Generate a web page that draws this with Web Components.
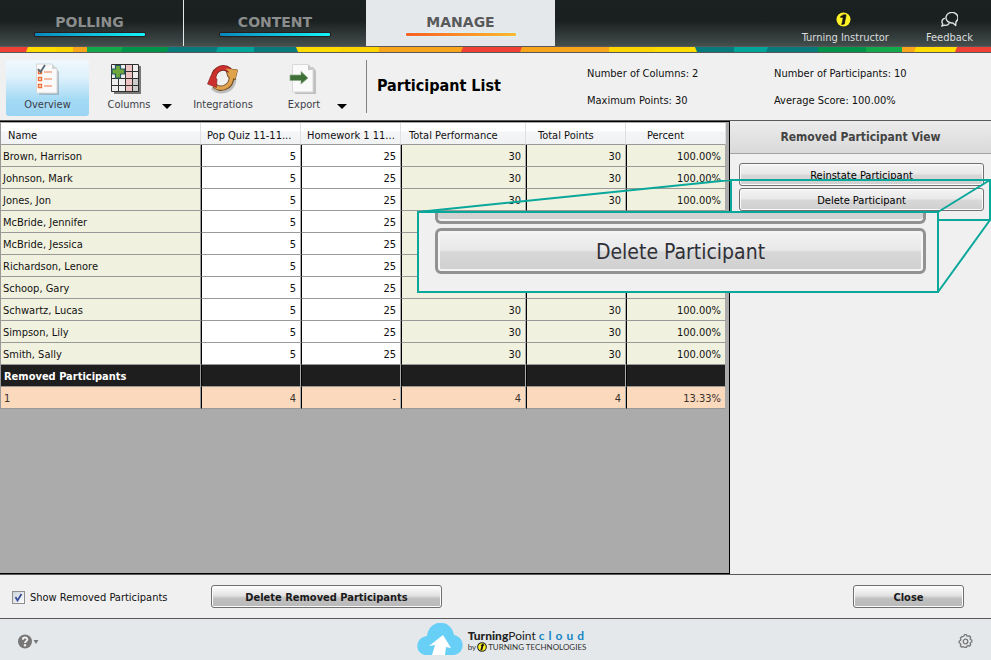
<!DOCTYPE html>
<html lang="en">
<head>
<meta charset="utf-8">
<title>Participant List</title>
<style>
html, body { margin: 0; }
body { font: 11px/14px "DejaVu Sans Condensed", "DejaVu Sans", "Noto Sans", sans-serif; color: #111; background: #f0f0f0; }
</style>
</head>
<body>
<turning-app></turning-app>
<script>
const define = (name, html) => customElements.define(name, class extends HTMLElement {
  constructor() {
    super();
    this.attachShadow({ mode: 'open' }).innerHTML = typeof html === 'function' ? html() : html;
  }
});

/* One main tab: label with a gradient bar below it */
define('nav-tab', `
<style>
:host { display: flex; flex: 0 0 183px; }
:host([wide]) { flex-basis: 189px; }
button { flex: 1; border: 0; padding: 14px 0 10px; font: bold 14px/17px "DejaVu Sans", sans-serif; color: #8b8d8d; background: none; display: flex; flex-direction: column; align-items: center; gap: 2px; }
:host(:first-child) button { padding-right: 4px; }
:host([line]) button { border-left: 1px solid #e5e8ea; }
:host([active]) button { background: #e4e8eb; color: #595a5c; }
i { width: 110px; height: 3px; border-radius: 1px; background: linear-gradient(90deg, #0788bd, #14f4fa); box-shadow: 0 0 1px 1px #281b1b; }
:host([active]) i { background: linear-gradient(90deg, #fb5e22, #fdb92f); box-shadow: 0 0 1px 1px #d9f3f8; }
</style>
<button type="button"><slot></slot><i></i></button>`);

define('user-link', `
<style>
:host { display: block; }
a { display: flex; flex-direction: column; align-items: center; gap: 4px; color: #dadcdc; text-decoration: none; }
::slotted(svg) { height: 15px; display: block; }
</style>
<a href="#"><slot name="icon"></slot><span><slot></slot></span></a>`);

define('app-header', `
<style>
:host { display: flex; height: 46px; background: linear-gradient(#1a2121, #1a2020 45%, #434e4d); }
nav { display: flex; }
.user { margin-left: auto; display: flex; gap: 37px; padding: 12px 18px 0 0; }
</style>
<nav>
<nav-tab>POLLING</nav-tab><nav-tab line>CONTENT</nav-tab><nav-tab wide active>MANAGE</nav-tab>
</nav>
<div class="user">
<user-link><svg slot="icon" width="19" height="15" viewBox="0 0 19 15"><circle cx="7.500" cy="7.500" r="7" fill="#fff326"/><path d="M4.200 5.200C5.500 3.200 8 2.200 10 2.800L9.800 5C9 7.500 9 9.500 8.400 12L5.600 12.600C6.500 10 6.800 8 7.200 5.600z" fill="#141414" stroke="#141414" stroke-width=".6"/></svg>Turning Instructor</user-link>
<user-link><svg slot="icon" width="18" height="15" viewBox="0 0 18 15" fill="none" stroke="#e0e2e2" stroke-width="1.4" stroke-linecap="round" stroke-linejoin="round"><path d="M15.700 13.500l-2.800-2.600A6 5.300 0 1 1 16 9.600z"/><path d="M4.400 6.400A4 3.700 0 0 0 2.700 12L1.800 14l2.700-.8c2 .5 3.600-.2 4.400-1.500"/></svg>Feedback</user-link>
</div>`);

define('color-stripe', () => {
  const parts = [[0,'#ef4136'],[27,'#ffdd00'],[56,'#fdd500'],[73,'#f9a51b',0],[87,'#12a84c',0],[122,'#00934a'],[168,'#067a7d'],[217,'#00a59a'],[254,'#067a7d',0],[297,'#ffdd00',-2],[340,'#fdd500'],[379,'#f9a51b',0],[462,'#ef4136'],[521,'#f9a51b'],[609,'#fdd500',0],[655,'#ffdd00'],[696,'#067a7d',-2],[734,'#00a59a',0],[767,'#067a7d'],[818,'#00934a',0],[866,'#12a84c',0],[902,'#f9a51b',0],[915,'#ffdd00'],[956,'#ef4136']];
  return `<style>:host { display: block; height: 5px; border: solid #59595b; border-width: 1px 0; } svg { display: block; width: 100%; height: 5px; }</style>
<svg viewBox="0 0 991 5" preserveAspectRatio="none">${parts.map(([x, c, s = 2]) => `<path fill="${c}" d="M${x ? x + s / 2 : -5} 0H991V5H${x ? x - s / 2 : -5}Z"/>`).join('')}</svg>`;
});

define('tool-button', `
<style>
:host { display: flex; align-items: flex-start; }
button { box-sizing: border-box; height: 56px; min-width: 62px; border: 0; border-radius: 3px; padding: 2px 0 3px; background: none; color: #3c3e48; font: inherit; line-height: 16px; display: flex; flex-direction: column; align-items: center; gap: 1px; }
:host([active]) button { min-width: 83px; background: linear-gradient(#f0f8fd, #dff2fc 30%, #a5daf5 70%, #9bd4f3); }
.more { display: none; width: 20px; min-width: 20px; padding: 44px 5px 7px; }
:host([menu]) .more { display: block; margin-left: -3px; }
svg { display: block; }
</style>
<button type="button"><slot name="icon"></slot><span><slot></slot></span></button>
<button type="button" class="more" aria-label="More"><svg width="10" height="5"><path d="M0 0H10L5 5Z" fill="#000"/></svg></button>`);

define('app-toolbar', `
<style>
:host { display: flex; align-items: flex-start; padding: 7px 6px 4px; border-bottom: 1px solid #5a5a5c; min-height: 56px; }
.tools { display: flex; align-items: flex-start; padding-right: 14px; border-right: 1px solid #838383; height: 53px; }
tool-button:nth-child(2) { margin-left: 9px; }
tool-button:nth-child(3) { margin-left: 15px; }
tool-button:nth-child(4) { margin-left: 19px; }
h1 { font-size: 16px; line-height: 20px; margin: 16px 0 0 10px; width: 210px; color: #000; white-space: nowrap; }
dl { display: grid; grid-template-columns: 187px auto; row-gap: 13px; margin: 7px 0 0; }
dl div { display: flex; gap: 3px; white-space: nowrap; }
dt, dd { margin: 0; }
</style>
<div class="tools">
<tool-button active><svg slot="icon" width="28" height="34" viewBox="0 0 28 34"><path d="M5 5h17l3 5v23H5z" fill="#8798a3" opacity=".55"/><path d="M2.500 2H18l5 5v24H2.500z" fill="#fafafa" stroke="#d8d8da"/><path d="M18 2v5h5z" fill="#d2d6d9"/><path d="M4.500 8.500h3v3h-3zM4.500 15.500h3v3h-3zM4.500 22.500h3v3h-3z" fill="#fff" stroke="#ee713a" stroke-width="1.400"/><path d="M10 10h8M10 17h8M10 24h8" stroke="#f3a584" stroke-width="1.600"/><path d="M4 7l2.500 3L11 3" fill="none" stroke="#53687b" stroke-width="1.800"/></svg>Overview</tool-button>
<tool-button menu><svg slot="icon" width="38" height="34" viewBox="0 0 38 34"><path d="M4 4h27v28H4z" fill="#777"/><path d="M1 2h27v28H1z" fill="#eee"/><path d="M15 2h7v28h-7z" fill="#edc3c3"/><path d="M22 16h6v14h-6z" fill="#ccc"/><path d="M1.500 2.500h27v27h-27zM8.500 2v28M15.500 2v28M22.500 2v28M1 9.500h27M1 16.500h27M1 23.500h27" fill="none" stroke="#303030"/><path d="M5.500 3.500h5V7h4v5h-4v4h-5v-4H2V7h3.500z" fill="#70a83b" stroke="#245a65" stroke-width="1.200"/></svg>Columns</tool-button>
<tool-button><svg slot="icon" width="34" height="34" viewBox="0 0 34 34"><path d="M6 26c7 7 22 5 23-9" fill="none" stroke="#999" stroke-width="3" opacity=".6"/><g fill="none"><path d="M8.500 23.500C13 28.500 26 27 25.500 14" stroke="#754d25" stroke-width="5.500"/></g><path d="M19.500 6.500 31.500 8 29 18l-3-2-4-1z" fill="#dfa24d" stroke="#754d25"/><path d="M8.500 23.500C13 28.500 26 27 25.500 13" fill="none" stroke="#dfa24d" stroke-width="3.500"/><path d="M24 8.500C16 2.500 6.500 8 7.500 19" fill="none" stroke="#7d2521" stroke-width="5.500"/><path d="M5 13.500 1.500 22 10.500 25.500 11 17z" fill="#cb302f" stroke="#7d2521" stroke-width=".6"/><path d="M23.500 8C16 2.500 6.500 8 7.500 20" fill="none" stroke="#cb302f" stroke-width="4"/><path d="M19.500 6.500 31.500 8 29.500 16l-4.500-4z" fill="#dfa24d"/></svg>Integrations</tool-button>
<tool-button menu><svg slot="icon" width="30" height="34" viewBox="2 0 30 34"><path d="M8 5h18l3 4v23H8z" fill="#999" opacity=".55"/><path d="M5.500 2.500H21l5 5V30H5.500z" fill="#fafafa" stroke="#d8d8da"/><path d="M21 2v6h5z" fill="#c7c7c7"/><path d="M3 13h11V9.500l7 6.500-7 6v-3.500H3z" fill="#3d7138" stroke="#8caa85" stroke-width=".7"/></svg>Export</tool-button>
</div>
<h1>Participant List</h1>
<dl>
<div><dt>Number of Columns:</dt><dd>2</dd></div><div><dt>Number of Participants:</dt><dd>10</dd></div>
<div><dt>Maximum Points:</dt><dd>30</dd></div><div><dt>Average Score:</dt><dd>100.00%</dd></div>
</dl>`);

define('participant-table', () => {
  const names = ['Brown, Harrison','Johnson, Mark','Jones, Jon','McBride, Jennifer','McBride, Jessica','Richardson, Lenore','Schoop, Gary','Schwartz, Lucas','Simpson, Lily','Smith, Sally'];
  const full = [5, 25, 30, 30, '100.00%'];
  const short = [5, 25, '', '', ''];
  const row = (head, cells, cls = '') => `<tr class="${cls}"><th scope="row">${head}</th>${cells.map(c => `<td>${c}</td>`).join('')}</tr>`;
  return `
<style>
:host { display: block; background: #ababab; border: solid #000; border-width: 1px 1px 1px 0; padding: 1px 3px 0 0; min-height: 451px; box-sizing: border-box; }
table { width: 100%; border-spacing: 0; table-layout: fixed; border-left: 1px solid #999; box-sizing: border-box; }
.m { width: 100px; } .l { width: 125px; }
th, td { box-sizing: border-box; height: 22px; padding: 2px 5px 0 2px; white-space: nowrap; overflow: hidden; font-weight: normal; }
thead th { text-align: left; padding: 4px 0 0 7px; background: linear-gradient(#fff 40%, #f4f5f7 41%, #f1f2f4); border-bottom: 1px solid #999; border-right: 1px solid #dfe0e2; }
thead th:nth-child(2), thead th:nth-child(3) { padding-left: 6px; }
thead th:nth-child(n+4) { padding-left: 8px; }
thead th:nth-child(5) { padding-left: 12px; }
thead th:last-child { text-align: center; padding: 4px 20px 0 0; }
tbody th { text-align: left; background: #f1f1df; border-right: 1px solid #999; border-bottom: 1px solid #999; }
td { text-align: right; background: #f1f1df; border-left: 1px solid #000; border-right: 1px solid #aaa; border-bottom: 1px solid #999; padding-right: 4px; }
td:nth-child(2), td:nth-child(3) { background: #fff; }
tr.dark > * { background: #1e1e1e; color: #fff; font-weight: bold; padding-left: 3px; }
tr.gone > * { background: #fad9bd; color: #3c302c; padding-left: 3px; }
</style>
<table><colgroup><col><col class="m"><col class="m"><col class="l"><col class="m"><col class="m"></colgroup>
<thead><tr>${['Name','Pop Quiz 11-11...','Homework 1 11...','Total Performance','Total Points','Percent'].map(t => `<th scope="col">${t}</th>`).join('')}</tr></thead>
<tbody>${names.map((n, i) => row(n, i > 2 && i < 7 ? short : full)).join('')}${row('Removed Participants', ['','','','',''], 'dark')}${row('1', [4, '-', 4, 4, '13.33%'], 'gone')}</tbody></table>`;
});

define('push-button', `
<style>
:host { display: block; }
button { box-sizing: border-box; width: 100%; height: 23px; padding: 2px 8px 0; border: 1px solid #707070; border-radius: 3px; font: inherit; color: #000; background: linear-gradient(#f4f4f4, #e8e8e8 48%, #d8d8d8 52%, #cfcfcf); box-shadow: inset 0 0 0 1px #fbfbfb; white-space: nowrap; }
:host([strong]) button { font-weight: bold; color: #1a1a1a; background: linear-gradient(#fff, #e2e2e2 45%, #c0c0c0 60%, #b9b9b9); }
:host([large]) button { height: 46px; font-size: 21px; line-height: 28px; border: 3px solid #929292; border-radius: 6px; color: #303038; box-shadow: inset 0 0 0 2px #f5f5f5; }
</style>
<button type="button"><slot></slot></button>`);

define('side-panel', `
<style>
:host { display: block; }
h2 { margin: 0; font-size: 12px; line-height: 32px; text-align: center; color: #444; background: linear-gradient(#ececec, #d9d9d9); border-bottom: 1px solid #a2a2a2; }
.actions { display: grid; gap: 2px; padding: 9px 7px 9px 9px; }
</style>
<h2>Removed Participant View</h2>
<div class="actions"><push-button>Reinstate Participant</push-button><push-button>Delete Participant</push-button></div>`);

/* Magnified view of the Delete button, laid over table and panel */
define('zoom-callout', `
<style>
:host { position: absolute; right: 0; top: 58px; width: 574px; height: 114px; }
svg { position: absolute; inset: 0; }
.lens { position: absolute; left: 0; bottom: 0; box-sizing: border-box; width: 522px; height: 82px; border: 2px solid #0aa79b; background: #f0f0f0; padding: 0 11px 0 16px; overflow: hidden; }
.edge { box-sizing: border-box; height: 11px; border: 3px solid #929292; border-top: 0; border-radius: 0 0 6px 6px; background: #d2d2d2; margin-bottom: 4px; box-shadow: inset 0 -2px #f5f5f5; }
</style>
<svg width="574" height="114" fill="none" stroke="#0aa79b" stroke-width="2"><path d="M314 1H573V41H314ZM1 33L314 1M521 33L573 1M521 113L573 41"/></svg>
<div class="lens"><div class="edge"></div><push-button large>Delete Participant</push-button></div>`);

define('app-footer', `
<style>
:host { display: block; border-top: 1px solid #59595b; }
.actions { display: grid; grid-template-columns: 199px 231px 1fr 111px; align-items: center; padding: 10px 27px 10px 12px; }
label { display: flex; align-items: center; gap: 5px; white-space: nowrap; padding-top: 2px; }
input { appearance: none; margin: 0; width: 13px; height: 13px; border: 1px solid #8e8f8f; background: linear-gradient(135deg, #cbd2da, #fff); }
input:checked { background: url("data:image/svg+xml,%3Csvg xmlns='http://www.w3.org/2000/svg' viewBox='0 0 11 11'%3E%3Cpath d='M2.500 5l2 3.500L8.500 2' fill='none' stroke='%23394f9b' stroke-width='1.800'/%3E%3C/svg%3E"), linear-gradient(135deg, #cbd2da, #fff); }
push-button:last-child { grid-column: 4; }
.brand { display: grid; grid-template-columns: 1fr auto 1fr; align-items: center; min-height: 41px; padding: 0 18px; background: #e4e8eb; border-top: 1px solid #59595b; }
.icon { border: 0; padding: 3px 0 0; background: none; display: flex; align-items: center; justify-self: start; }
.gear { justify-self: end; }
.logo { display: flex; align-items: center; gap: 5px; margin-left: 12px; color: #333; }
.words p { margin: 2px 0 0; font: 12px/13px Lato, sans-serif; color: #222; white-space: nowrap; }
.words p b { font-weight: 900; }
.words em { font-style: normal; color: #1586c6; font-weight: bold; display: inline-flex; gap: 4px; margin-left: 3px; }
.words small { display: flex; align-items: center; gap: 1px; font: 8px/11px Lato, sans-serif; color: #333; white-space: nowrap; }
</style>
<div class="actions">
<label><input type="checkbox" checked>Show Removed Participants</label>
<push-button strong>Delete Removed Participants</push-button>
<push-button strong>Close</push-button>
</div>
<div class="brand">
<button class="icon" type="button" aria-label="Help"><svg width="21" height="15" viewBox="0 0 21 15"><circle cx="7" cy="7.500" r="7" fill="#777"/><path d="M4.800 5.700C4.800 2.800 9.300 2.800 9.300 5.500 9.300 7.200 7 7.200 7 9" fill="none" stroke="#f0f0f0" stroke-width="1.900"/><circle cx="7" cy="11.300" r="1.200" fill="#f0f0f0"/><path d="M15.500 6h5L18 10z" fill="#777"/></svg></button>
<div class="logo">
<svg width="46" height="33" viewBox="0 0 46 33"><path d="M8 32C-3 30-2 14 10 13 12-4 34-5 37 12c11 2 12 18 0 20z" fill="#68cff6"/><path d="M15 32l3-10-6 1L26 12l8 13-5-1-1 8z" fill="#fff"/></svg>
<div class="words"><p><b>Turning</b>Point<em><span>c</span><span>l</span><span>o</span><span>u</span><span>d</span></em></p>
<small>by <svg width="10" height="10" viewBox="0 0 15 15"><circle cx="7.500" cy="7.500" r="6.500" fill="#fff326" stroke="#222" stroke-width="1.600"/><path d="M5 5.500 9 2l2 3.800-1.500-.1L8 12l-3 .6 1.700-7z" fill="#141414"/></svg> TURNING TECHNOLOGIES</small></div>
</div>
<button class="icon gear" type="button" aria-label="Settings"><svg width="15" height="15" viewBox="0 0 15 15" fill="none" stroke="#777" stroke-width="1.300" stroke-linejoin="round"><path d="M6 2l.5-1.300h2L9 2l1 .4 1.300-.6 1.400 1.400-.6 1.300.4 1 1.300.5v2l-1.300.5-.4 1 .6 1.300-1.400 1.400-1.300-.6-1 .4-.5 1.300h-2L6 13l-1-.4-1.300.6-1.400-1.400.6-1.300-.4-1L1.200 9V7l1.300-.5.4-1-.6-1.300 1.400-1.400L5 2.400z"/><circle cx="7.500" cy="7.500" r="2.300"/></svg></button>
</div>`);

define('turning-app', `
<style>
:host { display: flex; flex-direction: column; min-height: 100vh; }
main { position: relative; flex: 1; display: grid; grid-template-columns: minmax(0, 1fr) 261px; }
</style>
<app-header></app-header><color-stripe></color-stripe><app-toolbar></app-toolbar>
<main><participant-table></participant-table><side-panel></side-panel><zoom-callout></zoom-callout></main>
<app-footer></app-footer>`);
</script>
</body>
</html>
